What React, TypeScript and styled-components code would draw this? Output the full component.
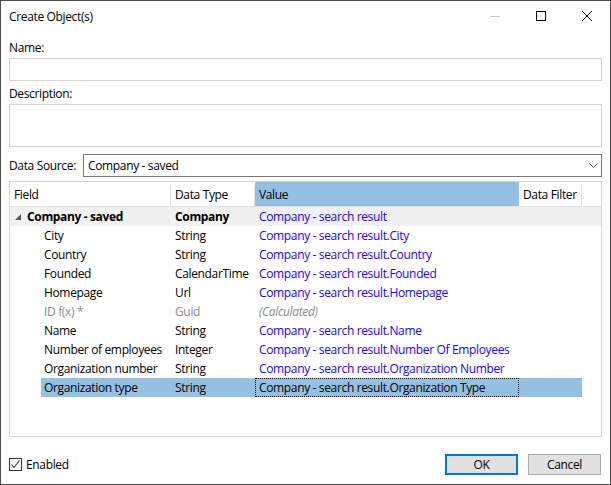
import React from "react";
import styled, { createGlobalStyle, css } from "styled-components";

const Global = createGlobalStyle`
  html, body { margin: 0; padding: 0; background: #ffffff; }
  body { font-family: "Open Sans", "Noto Sans", sans-serif; font-size: 12px; color: #000; letter-spacing: -0.35px; }
  * { box-sizing: border-box; }
`;

const Window = styled.div`
  width: 611px;
  height: 485px;
  border: 1px solid #4d4d4d;
  background: #ffffff;
  display: flex;
  flex-direction: column;
`;

const TitleBar = styled.div`
  height: 30px;
  display: flex;
  align-items: center;
  padding-left: 8px;
`;

const Title = styled.div`
  flex: 1;
  font-size: 12px;
`;

const CaptionButton = styled.div`
  width: 46px;
  height: 30px;
  display: flex;
  align-items: center;
  justify-content: center;
`;

const Body = styled.div`
  flex: 1;
  display: flex;
  flex-direction: column;
  padding: 0 8px 0 8px;
`;

const Label = styled.div<{ $top: number }>`
  margin-top: ${(p) => p.$top}px;
  height: 16px;
  line-height: 16px;
`;

const TextBox = styled.div<{ $height: number; $top: number }>`
  margin-top: ${(p) => p.$top}px;
  height: ${(p) => p.$height}px;
  border: 1px solid #d2d2d2;
  background: #fff;
`;

const SourceRow = styled.div`
  margin-top: 7px;
  display: flex;
  align-items: center;
  height: 23px;
`;

const SourceLabel = styled.div`
  width: 74px;
`;

const Combo = styled.div`
  flex: 1;
  height: 23px;
  border: 1px solid #7a7a7a;
  display: flex;
  align-items: center;
  padding-left: 4px;
`;

const ComboText = styled.div`
  flex: 1;
`;

const ComboArrow = styled.div`
  width: 16px;
  display: flex;
  align-items: center;
  justify-content: center;
`;

const Table = styled.div`
  margin-top: 4px;
  height: 256px;
  border: 1px solid #d5d5d5;
  display: flex;
  flex-direction: column;
`;

const cols = "161px 84px 264px 63px";

const HeaderRow = styled.div`
  display: grid;
  grid-template-columns: ${cols};
  height: 25px;
  border-bottom: 1px solid #e3e3e3;
`;

const HeaderCell = styled.div<{ $active?: boolean }>`
  display: flex;
  align-items: center;
  padding-left: 4px;
  position: relative;
  ${(p) =>
    p.$active
      ? css`
          background: #92bfe2;
        `
      : css`
          &::after {
            content: "";
            position: absolute;
            right: 0;
            top: 3px;
            bottom: 0;
            width: 1px;
            background: #e3e3e3;
          }
        `}
`;

const Rows = styled.div`
  display: flex;
  flex-direction: column;
`;

const Row = styled.div<{ $group?: boolean }>`
  display: grid;
  grid-template-columns: ${cols};
  height: 19px;
  ${(p) =>
    p.$group &&
    css`
      background: #f0f0f0;
      font-weight: 700;
    `}
`;

const Cell = styled.div<{
  $tone?: "normal" | "blue" | "gray";
  $italic?: boolean;
  $selected?: boolean;
  $focus?: boolean;
  $plain?: boolean;
}>`
  display: flex;
  align-items: center;
  padding-left: 4px;
  white-space: nowrap;
  overflow: hidden;
  color: ${(p) =>
    p.$tone === "blue" ? "#1a00ff" : p.$tone === "gray" ? "#8a8a8a" : "#000"};
  font-style: ${(p) => (p.$italic ? "italic" : "normal")};
  font-weight: ${(p) => (p.$plain ? 400 : "inherit")};
  ${(p) =>
    p.$selected &&
    css`
      background: #94c0e2;
    `}
  ${(p) =>
    p.$focus &&
    css`
      outline: 1px dotted #000;
      outline-offset: -1px;
    `}
`;

const FieldCell = styled.div<{ $tone?: "normal" | "gray" }>`
  display: flex;
  align-items: center;
  white-space: nowrap;
  color: ${(p) => (p.$tone === "gray" ? "#8a8a8a" : "#000")};
`;

const FieldPad = styled.div`
  width: 31px;
  height: 100%;
  flex: none;
`;

const FieldText = styled.div<{ $selected?: boolean }>`
  flex: 1;
  height: 100%;
  display: flex;
  align-items: center;
  padding-left: 3px;
  ${(p) =>
    p.$selected &&
    css`
      background: #94c0e2;
    `}
`;

const Expander = styled.div`
  width: 17px;
  padding-left: 5px;
  display: flex;
  align-items: center;
`;

const Footer = styled.div`
  margin-top: 17px;
  height: 21px;
  display: flex;
  align-items: center;
  padding-right: 1px;
`;

const CheckWrap = styled.label`
  flex: 1;
  display: flex;
  align-items: center;
  gap: 4px;
`;

const CheckBox = styled.div`
  width: 13px;
  height: 13px;
  border: 1px solid #333;
  display: flex;
  align-items: center;
  justify-content: center;
  background: #fff;
`;

const Button = styled.div<{ $default?: boolean }>`
  width: 73px;
  height: 21px;
  background: #e1e1e1;
  border: ${(p) => (p.$default ? "2px solid #0078d7" : "1px solid #adadad")};
  display: flex;
  align-items: center;
  justify-content: center;
  & + & {
    margin-left: 10px;
  }
`;

type Item = {
  field: string;
  type: string;
  value: string;
  gray?: boolean;
};

const items: Item[] = [
  { field: "City", type: "String", value: "Company - search result.City" },
  { field: "Country", type: "String", value: "Company - search result.Country" },
  { field: "Founded", type: "CalendarTime", value: "Company - search result.Founded" },
  { field: "Homepage", type: "Url", value: "Company - search result.Homepage" },
  { field: "ID f(x) *", type: "Guid", value: "(Calculated)", gray: true },
  { field: "Name", type: "String", value: "Company - search result.Name" },
  {
    field: "Number of employees",
    type: "Integer",
    value: "Company - search result.Number Of Employees",
  },
  {
    field: "Organization number",
    type: "String",
    value: "Company - search result.Organization Number",
  },
  {
    field: "Organization type",
    type: "String",
    value: "Company - search result.Organization Type",
  },
];

export default function App() {
  return (
    <>
      <Global />
      <Window>
        <TitleBar>
          <Title>Create Object(s)</Title>
          <CaptionButton>
            <svg width="10" height="10" viewBox="0 0 10 10">
              <line x1="0" y1="5.5" x2="10" y2="5.5" stroke="#c6c6c6" strokeWidth="1" />
            </svg>
          </CaptionButton>
          <CaptionButton>
            <svg width="10" height="10" viewBox="0 0 10 10">
              <rect x="0.5" y="0.5" width="9" height="9" fill="none" stroke="#000" strokeWidth="1" />
            </svg>
          </CaptionButton>
          <CaptionButton>
            <svg width="10" height="10" viewBox="0 0 10 10">
              <path d="M0 0L10 10M10 0L0 10" stroke="#000" strokeWidth="1" />
            </svg>
          </CaptionButton>
        </TitleBar>
        <Body>
          <Label $top={9}>Name:</Label>
          <TextBox $top={2} $height={23} />
          <Label $top={5}>Description:</Label>
          <TextBox $top={2} $height={43} />
          <SourceRow>
            <SourceLabel>Data Source:</SourceLabel>
            <Combo>
              <ComboText>Company - saved</ComboText>
              <ComboArrow>
                <svg width="9" height="6" viewBox="0 0 9 6">
                  <path d="M0.5 0.5L4.5 4.5L8.5 0.5" fill="none" stroke="#555" strokeWidth="1" />
                </svg>
              </ComboArrow>
            </Combo>
          </SourceRow>
          <Table>
            <HeaderRow>
              <HeaderCell>Field</HeaderCell>
              <HeaderCell>Data Type</HeaderCell>
              <HeaderCell $active>Value</HeaderCell>
              <HeaderCell>Data Filter</HeaderCell>
            </HeaderRow>
            <Rows>
              <Row $group>
                <FieldCell>
                  <Expander>
                    <svg width="6" height="6" viewBox="0 0 6 6">
                      <path d="M6 0L6 6L0 6Z" fill="#595959" />
                    </svg>
                  </Expander>
                  Company - saved
                </FieldCell>
                <Cell>Company</Cell>
                <Cell $tone="blue" $plain>
                  Company - search result
                </Cell>
                <Cell />
              </Row>
              {items.map((it, i) => {
                const selected = i === items.length - 1;
                return (
                  <Row key={it.field}>
                    <FieldCell $tone={it.gray ? "gray" : "normal"}>
                      <FieldPad />
                      <FieldText $selected={selected}>{it.field}</FieldText>
                    </FieldCell>
                    <Cell $tone={it.gray ? "gray" : "normal"} $selected={selected}>
                      {it.type}
                    </Cell>
                    <Cell
                      $tone={it.gray ? "gray" : selected ? "normal" : "blue"}
                      $italic={it.gray}
                      $selected={selected}
                      $focus={selected}
                    >
                      {it.value}
                    </Cell>
                    <Cell $selected={selected} />
                  </Row>
                );
              })}
            </Rows>
          </Table>
          <Footer>
            <CheckWrap>
              <CheckBox>
                <svg width="11" height="11" viewBox="0 0 11 11">
                  <path d="M1.5 5.5L4 8.5L9.5 1.5" fill="none" stroke="#333" strokeWidth="1.1" />
                </svg>
              </CheckBox>
              Enabled
            </CheckWrap>
            <Button $default>OK</Button>
            <Button>Cancel</Button>
          </Footer>
        </Body>
      </Window>
    </>
  );
}
